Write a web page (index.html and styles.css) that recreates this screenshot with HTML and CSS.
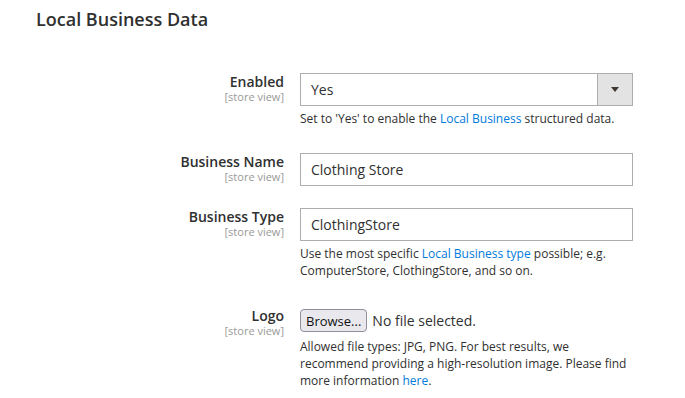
FILE: index.html
```html
<!DOCTYPE html>
<html lang="en">
<head>
  <meta charset="UTF-8">
  <title>Local Business Data</title>
  <link rel="stylesheet" href="styles.css">
</head>
<body>
  <div class="page">
    <h2 class="section-title">Local Business Data</h2>

    <div class="row">
      <div class="label">
        <span class="label-text">Enabled</span>
        <span class="scope">[store view]</span>
      </div>
      <div class="field">
        <div class="select">
          <span class="select-value">Yes</span>
          <span class="select-arrow"></span>
        </div>
        <p class="note">Set to 'Yes' to enable the <a href="#">Local Business</a> structured data.</p>
      </div>
    </div>

    <div class="row">
      <div class="label">
        <span class="label-text">Business Name</span>
        <span class="scope">[store view]</span>
      </div>
      <div class="field">
        <input class="text-input" type="text" value="Clothing Store">
      </div>
    </div>

    <div class="row">
      <div class="label">
        <span class="label-text">Business Type</span>
        <span class="scope">[store view]</span>
      </div>
      <div class="field">
        <input class="text-input" type="text" value="ClothingStore">
        <p class="note">Use the most specific <a href="#">Local Business type</a> possible; e.g. ComputerStore, ClothingStore, and so on.</p>
      </div>
    </div>

    <div class="row row-file">
      <div class="label">
        <span class="label-text">Logo</span>
        <span class="scope">[store view]</span>
      </div>
      <div class="field">
        <div class="file">
          <button type="button" class="browse">Browse...</button>
          <span class="file-name">No file selected.</span>
        </div>
        <p class="note">Allowed file types: JPG, PNG. For best results, we recommend providing a high-resolution image. Please find more information <a href="#">here</a>.</p>
      </div>
    </div>
  </div>
</body>
</html>
```

FILE: styles.css
```css
body {
  margin: 0;
  font-family: "Open Sans", Arial, sans-serif;
  color: #303030;
  background: #fff;
}
.page {
  padding: 9px 0 0 36px;
}
.section-title {
  margin: 0 0 44px;
  font-size: 18px;
  font-weight: 600;
  line-height: 20px;
  color: #303030;
}
.row {
  display: grid;
  grid-template-columns: 248px 333px;
  column-gap: 16px;
  margin-bottom: 22px;
}
.row-file {
  padding-top: 3px;
}
.label {
  text-align: right;
}
.label-text {
  display: block;
  font-size: 14px;
  font-weight: 600;
  line-height: 18px;
}
.scope {
  display: block;
  font-size: 11px;
  line-height: 11px;
  color: #999;
}
.select, .text-input {
  box-sizing: border-box;
  width: 100%;
  height: 33px;
  border: 1px solid #adadad;
  background: #fff;
  font-family: inherit;
  font-size: 14px;
  color: #303030;
}
.select {
  display: flex;
  align-items: center;
}
.select-value {
  flex: 1;
  padding-left: 10px;
}
.select-arrow {
  align-self: stretch;
  width: 34px;
  background: #e3e3e3;
  border-left: 1px solid #adadad;
  display: flex;
  align-items: center;
  justify-content: center;
}
.select-arrow::after {
  content: "";
  border-top: 5px solid #41362f;
  border-left: 4px solid transparent;
  border-right: 4px solid transparent;
}
.text-input {
  display: block;
  padding: 0 10px;
  outline: none;
}
.note {
  margin: 5px 0 3px;
  font-size: 12px;
  line-height: 16.8px;
}
.note a {
  color: #007bdb;
  text-decoration: none;
}
.file {
  display: flex;
  align-items: center;
  gap: 5px;
  padding-top: 2px;
}
.browse {
  height: 23px;
  padding: 0 5px;
  font-family: inherit;
  font-size: 13px;
  color: #111;
  background: #e9e9ed;
  border: 1px solid #8f8f9d;
  border-radius: 4px;
}
.file-name {
  font-size: 14px;
}
.file + .note {
  margin-top: 7px;
}
```
